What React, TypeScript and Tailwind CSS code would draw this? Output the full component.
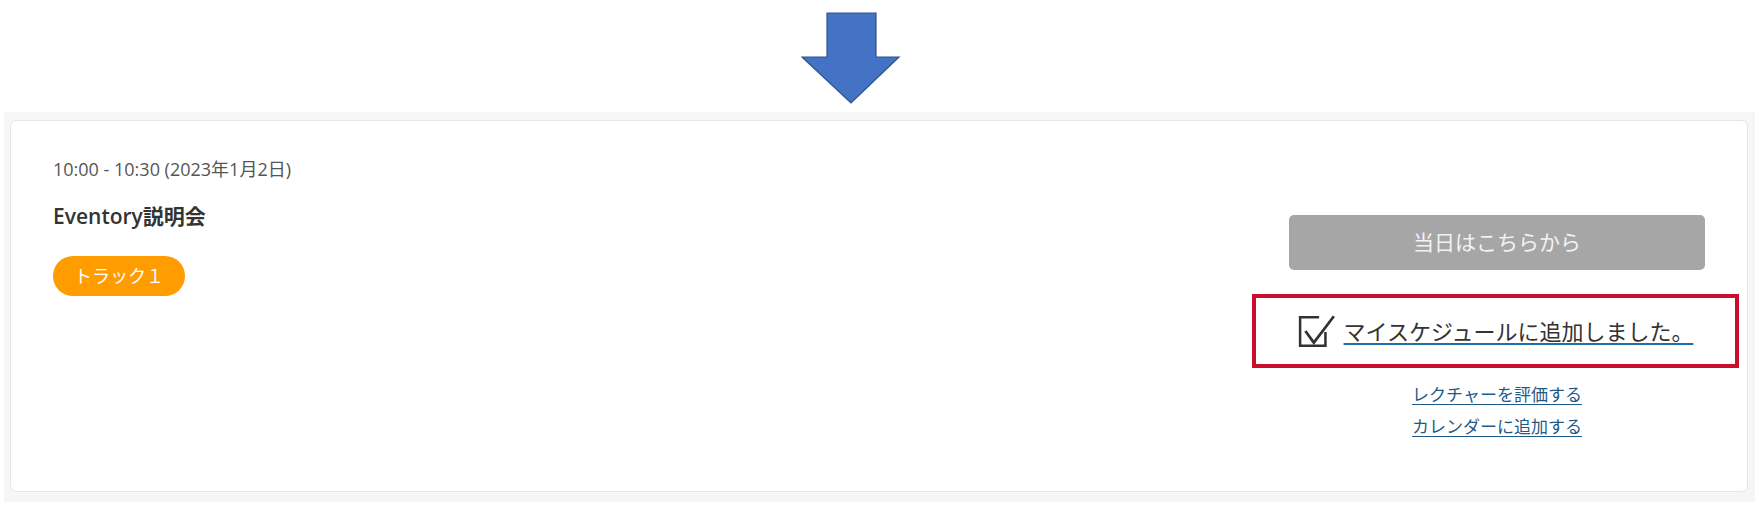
const jp = { fontFamily: '"Open Sans", "Noto Sans CJK JP", sans-serif' };

function DownArrow() {
  return (
    <svg width="100" height="94" viewBox="0 0 100 94">
      <polygon
        points="26,2 75,2 75,46 98,46 50,92 1,46 26,46"
        fill="#4472c4"
        stroke="#2f528f"
        strokeWidth="1.2"
      />
    </svg>
  );
}

function CheckedBox() {
  return (
    <svg width="38" height="36" viewBox="0 0 36 34" fill="none">
      <path d="M26 18v13H2V4h18" stroke="#333" strokeWidth="2.4" />
      <path d="M7 17l8 11L34 3" stroke="#333" strokeWidth="2.6" />
    </svg>
  );
}

export default function App() {
  return (
    <div className="w-[1759px] h-[510px] bg-white" style={jp}>
      <div className="h-[112px] pl-[801px] pt-[11px]">
        <DownArrow />
      </div>

      <div className="mx-[4px] w-[1751px] h-[390px] bg-[#f6f6f6] pt-[8px] pl-[6px]">
        <div className="w-[1738px] h-[372px] bg-white border border-[#e6e6e6] rounded-md flex justify-between px-[42px]">
          <div className="pt-[35px]">
            <p className="text-[18px] leading-[26px] text-[#555]">10:00 - 10:30 (2023年1月2日)</p>
            <h2 className="mt-[20px] text-[21px] leading-[28px] font-semibold text-[#333]">Eventory説明会</h2>
            <span className="mt-[26px] inline-flex items-center justify-center w-[132px] h-[40px] rounded-full bg-[#ff9d00] text-white text-[18px]">
              トラック１
            </span>
          </div>

          <div className="pt-[94px] w-[416px] flex flex-col items-center">
            <button className="w-[416px] h-[55px] rounded-[5px] bg-[#a6a6a6] text-[#f2f2f2] text-[21px]">
              当日はこちらから
            </button>

            <div className="mt-[24px] -ml-[37px] -mr-[34px] w-[487px] h-[74px] border-4 border-[#c8102e] flex items-center justify-center gap-[8px]">
              <CheckedBox />
              <a
                href="#"
                className="text-[22px] leading-[30px] text-[#333] underline decoration-[#1f6fa8] decoration-2 underline-offset-[3px]"
              >
                マイスケジュールに追加しました。
              </a>
            </div>

            <div className="mt-[15px] flex flex-col items-center gap-[8px] text-[17px] leading-[24px] text-[#1f5a85]">
              <a href="#" className="underline underline-offset-[3px]">レクチャーを評価する</a>
              <a href="#" className="underline underline-offset-[3px]">カレンダーに追加する</a>
            </div>
          </div>
        </div>
      </div>
    </div>
  );
}
